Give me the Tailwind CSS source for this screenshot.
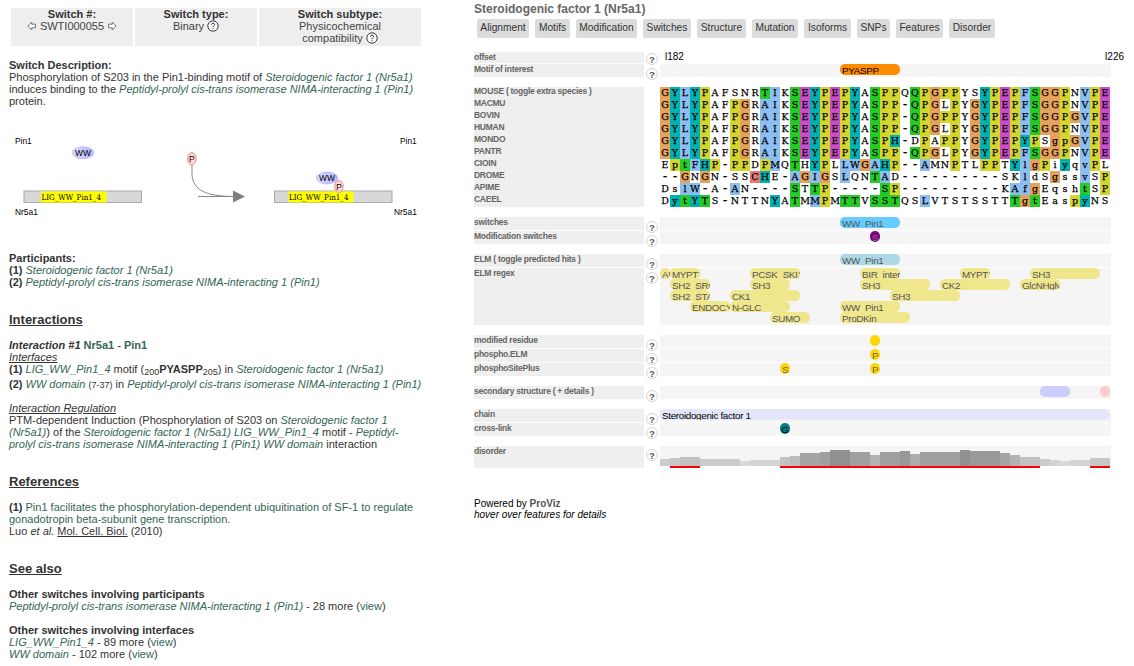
<!DOCTYPE html>
<html lang="en">
<head>
<meta charset="utf-8">
<title>SWTI000055</title>
<script src="https://cdn.jsdelivr.net/npm/@tailwindcss/browser@4"></script>
</head>
<body class="bg-white w-[1134px] h-[666px] overflow-hidden font-['Liberation_Sans',Arial,sans-serif]">
<div class="flex items-start">
  <section class="w-[474px] shrink-0 pl-[9px] pt-[8px] text-[11px] leading-[12px] text-[#333] whitespace-nowrap">
    <div class="flex gap-[2px] pl-[2px] h-[38px] text-center text-[#444]">
      <div class="w-[122px] bg-[#eee]"><b class="block text-[#333]">Switch #:</b>
        <div class="flex items-center justify-center gap-[3px]">
          <svg class="shrink-0" width="10" height="10" viewBox="0 0 10 10" fill="#fff" stroke="#666" stroke-width=".9"><path d="M.8 5 4.800 1V3.200H8.500V6.800H4.800V9Z"/></svg>
          <span>SWTI000055</span>
          <svg class="shrink-0" width="10" height="10" viewBox="0 0 10 10" fill="#fff" stroke="#666" stroke-width=".9"><path d="M9.200 5 5.200 1V3.200H1.500V6.800H5.200V9Z"/></svg>
        </div>
      </div>
      <div class="w-[122px] bg-[#eee]"><b class="block text-[#333]">Switch type:</b>
        <div class="flex items-center justify-center gap-[3px]"><span>Binary</span>
          <svg width="12" height="12" viewBox="0 0 12 12"><circle cx="6" cy="6" r="5.2" fill="#fff" stroke="#222" stroke-width=".9"/><path d="M4.4 4.7C4.4 2.7 7.6 2.7 7.6 4.6 7.6 5.8 6 5.8 6 7.2M6 8.2V9.2" fill="none" stroke="#222"/></svg>
        </div>
      </div>
      <div class="w-[162px] bg-[#eee]"><b class="block text-[#333]">Switch subtype:</b>
        <div>Physicochemical</div>
        <div class="flex items-center justify-center gap-[3px]"><span>compatibility</span>
          <svg width="12" height="12" viewBox="0 0 12 12"><circle cx="6" cy="6" r="5.2" fill="#fff" stroke="#222" stroke-width=".9"/><path d="M4.4 4.7C4.4 2.7 7.6 2.7 7.6 4.6 7.6 5.8 6 5.8 6 7.2M6 8.2V9.2" fill="none" stroke="#222"/></svg>
        </div>
      </div>
    </div>

    <div class="mt-[13px]">
      <b>Switch Description:</b><br>
      Phosphorylation of S203 in the Pin1-binding motif of <i class="text-[#365]">Steroidogenic factor 1 (Nr5a1)</i><br>
      induces binding to the <i class="text-[#365]">Peptidyl-prolyl cis-trans isomerase NIMA-interacting 1 (Pin1)</i><br>
      protein.
    </div>

    <svg class="block mt-[18px] -ml-[9px]" width="430" height="100" viewBox="0 0 430 100" font-family="Liberation Sans, Arial, sans-serif" fill="#000">
      <defs>
        <linearGradient id="blue"><stop offset="0" stop-color="#dcdcff"/><stop offset="1" stop-color="#b4b4fa"/></linearGradient>
        <radialGradient id="pink"><stop offset="0" stop-color="#fff0f0"/><stop offset="1" stop-color="#ffc4c4"/></radialGradient>
      </defs>
      <g font-size="8.4"><text x="15" y="19">Pin1</text><text x="400" y="19">Pin1</text><text x="15" y="90">Nr5a1</text><text x="394" y="90">Nr5a1</text></g>
      <g stroke="#aaa"><rect x="24" y="66" width="117.500" height="11.500" fill="#d8d8d8"/><rect x="274.500" y="66" width="117.500" height="11.500" fill="#d8d8d8"/></g>
      <g fill="#ff0"><rect x="41" y="66.500" width="65.500" height="11"/><rect x="288.500" y="66.500" width="65" height="11"/></g>
      <g font-family="DejaVu Serif, serif" font-size="7.800"><text x="41.500" y="75" textLength="59.500" lengthAdjust="spacingAndGlyphs">LIG_WW_Pin1_4</text><text x="289" y="75" textLength="59.500" lengthAdjust="spacingAndGlyphs">LIG_WW_Pin1_4</text></g>
      <g fill="none" stroke="#888"><path d="M192 40V48C192 66 207 71 233 71.500M198 71.500H233"/></g>
      <path d="M233 65.500 245 71.500 233 77.500Z" fill="#808080"/>
      <g stroke="#aaaaf0" stroke-width=".6" fill="url(#blue)"><ellipse cx="83" cy="27.700" rx="10.800" ry="6"/><ellipse cx="327" cy="53" rx="10.800" ry="6"/></g>
      <g stroke="#f08c8c" stroke-width=".9" fill="url(#pink)"><ellipse cx="191.800" cy="33.700" rx="4.300" ry="6.200"/><ellipse cx="339" cy="61.500" rx="4.300" ry="6"/></g>
      <g font-size="8.400" text-anchor="middle"><text x="83" y="30.800">WW</text><text x="327" y="56">WW</text><text x="191.800" y="37.200">P</text><text x="339" y="65">P</text></g>
    </svg>

    <div class="mt-[27px]">
      <b>Participants:</b><br>
      <b>(1)</b> <i class="text-[#365]">Steroidogenic factor 1 (Nr5a1)</i><br>
      <b>(2)</b> <i class="text-[#365]">Peptidyl-prolyl cis-trans isomerase NIMA-interacting 1 (Pin1)</i>
    </div>

    <h2 class="mt-[24px] h-[16px] leading-[16px] text-[13px] font-bold underline">Interactions</h2>
    <div class="mt-[11px]">
      <b><i>Interaction #1</i> <span class="text-[#365]">Nr5a1 - Pin1</span></b><br>
      <i class="underline">Interfaces</i><br>
      <b>(1)</b> <i class="text-[#365]">LIG_WW_Pin1_4</i> motif (<span class="text-[9px] relative top-[2px]">200</span><b>PYASPP</b><span class="text-[9px] relative top-[2px]">205</span>) in <i class="text-[#365]">Steroidogenic factor 1 (Nr5a1)</i>
      <div class="mt-[2px]"><b>(2)</b> <i class="text-[#365]">WW domain</i> <span class="text-[9px]">(7-37)</span> in <i class="text-[#365]">Peptidyl-prolyl cis-trans isomerase NIMA-interacting 1 (Pin1)</i></div>
    </div>
    <div class="mt-[11px]">
      <i class="underline">Interaction Regulation</i><br>
      PTM-dependent Induction (Phosphorylation of S203 on <i class="text-[#365]">Steroidogenic factor 1</i><br>
      <i class="text-[#365]">(Nr5a1)</i>) of the <i class="text-[#365]">Steroidogenic factor 1 (Nr5a1) LIG_WW_Pin1_4</i> motif - <i class="text-[#365]">Peptidyl-</i><br>
      <i class="text-[#365]">prolyl cis-trans isomerase NIMA-interacting 1 (Pin1) WW domain</i> interaction
    </div>

    <h2 class="mt-[24px] h-[16px] leading-[16px] text-[13px] font-bold underline">References</h2>
    <div class="mt-[11px]">
      <b>(1)</b> <span class="text-[#365]">Pin1 facilitates the phosphorylation-dependent ubiquitination of SF-1 to regulate<br>gonadotropin beta-subunit gene transcription.</span><br>
      Luo <i>et al.</i> <span class="underline">Mol. Cell. Biol.</span> (2010)
    </div>

    <h2 class="mt-[24px] h-[16px] leading-[16px] text-[13px] font-bold underline">See also</h2>
    <div class="mt-[11px]">
      <b>Other switches involving participants</b><br>
      <i class="text-[#365]">Peptidyl-prolyl cis-trans isomerase NIMA-interacting 1 (Pin1)</i> - 28 more (<span class="text-[#365]">view</span>)
    </div>
    <div class="mt-[12px]">
      <b>Other switches involving interfaces</b><br>
      <i class="text-[#365]">LIG_WW_Pin1_4</i> - 89 more (<span class="text-[#365]">view</span>)<br>
      <i class="text-[#365]">WW domain</i> - 102 more (<span class="text-[#365]">view</span>)
    </div>
  </section>

  <section class="w-[660px] shrink-0 pt-[2px] whitespace-nowrap">
    <h1 class="h-[14px] leading-[14px] text-[12px] font-bold text-[#666]">Steroidogenic factor 1 (Nr5a1)</h1>
    <nav class="mt-[3px] ml-[3px] flex gap-[6px] h-[19px] leading-[18px] text-[10.2px] text-center text-[#333]">
      <span class="w-[52px] rounded-[2px] bg-[#dcdcdc]">Alignment</span>
      <span class="w-[35px] rounded-[2px] bg-[#dcdcdc]">Motifs</span>
      <span class="w-[61px] rounded-[2px] bg-[#dcdcdc]">Modification</span>
      <span class="w-[48px] rounded-[2px] bg-[#dcdcdc]">Switches</span>
      <span class="w-[49px] rounded-[2px] bg-[#dcdcdc]">Structure</span>
      <span class="w-[46px] rounded-[2px] bg-[#dcdcdc]">Mutation</span>
      <span class="w-[47px] rounded-[2px] bg-[#dcdcdc]">Isoforms</span>
      <span class="w-[33px] rounded-[2px] bg-[#dcdcdc]">SNPs</span>
      <span class="w-[47px] rounded-[2px] bg-[#dcdcdc]">Features</span>
      <span class="w-[46px] rounded-[2px] bg-[#dcdcdc]">Disorder</span>
    </nav>
    <div id="tracks" class="mt-[14px]"></div>
    <footer class="mt-[30px] text-[10px] leading-[11px] text-black">Powered by <b class="text-[#555]">ProViz</b><br><i>hover over features for details</i></footer>
  </section>
</div>

<script>
const KH = 'bg-[#f0e68c] text-[#555]', GOLD = 'bg-[#ffd700] text-[#666]';
// feature: [start column, end column, lane, label, classes]
const groups = [
  [['offset', 11, 'scale'],
   ['Motif of interest', 13, [[18, 24, 0, 'PYASPP', 'bg-[#ff8c00] text-black']]]],
  ['alignment'],
  [['switches', 13, [[18, 24, 0, 'WW_Pin1', 'bg-[#66ccff] text-[#555]']]],
   ['Modification switches', 13, [[21, 22, 0, 'S', 'bg-[#800080] text-[#777]']]]],
  [['ELM ( toggle predicted hits )', 13, [[18, 24, 0, 'WW_Pin1', 'bg-[#add8e6] text-[#555]']]],
   ['ELM regex', 57, [
     [0, 1, 0, 'AU', KH], [1, 4, 0, 'MYPT1', KH], [9, 14, 0, 'PCSK_SKI1', KH], [20, 24, 0, 'BIR_inter', KH], [30, 33, 0, 'MYPT1', KH], [37, 44, 0, 'SH3', KH],
     [1, 5, 1, 'SH2_SRC', KH], [9, 13, 1, 'SH3', KH], [20, 27, 1, 'SH3', KH], [28, 35, 1, 'CK2', KH], [36, 40, 1, 'GlcNHglyc', KH],
     [1, 5, 2, 'SH2_STAT', KH], [7, 14, 2, 'CK1', KH], [23, 30, 2, 'SH3', KH],
     [3, 7, 3, 'ENDOCYT', KH], [7, 13, 3, 'N-GLC', KH], [18, 24, 3, 'WW_Pin1', KH],
     [11, 15, 4, 'SUMO', KH], [18, 25, 4, 'ProDKin', KH]]]],
  [['modified residue', 13, [[21, 22, 0, '', GOLD]]],
   ['phospho.ELM', 13, [[21, 22, 0, 'P', GOLD]]],
   ['phosphoSitePlus', 13, [[12, 13, 0, 'S', GOLD], [21, 22, 0, 'P', GOLD]]]],
  [['secondary structure ( + details )', 13, [[38, 41, 0, '', 'bg-[#ccccff]'], [44, 45, 0, '', 'bg-[#ffcccc]']]]],
  [['chain', 13, [[0, 45, 0, 'Steroidogenic factor 1', 'bg-[#e6e6fa] text-black']]],
   ['cross-link', 13, [[12, 13, 0, 'G', 'bg-[#008080] text-black']]]],
  [['disorder', 22, 'disorder']]
];
const seqs = [
  ['MOUSE ( toggle extra species )', 'GYLYPAFSNRTIKSEYPEPYASPPQQPGPPYSYPEPFSGGPNVPE', 'otbty.....gb.gmtymyt.gyy.gyoyy..tymybgooy.bym'],
  ['MACMU', 'GYLYPAFPGRAIKSEYPEPYASPP-QPGLPYGYPEPFSGGPNVPE', 'otbty..yo.bb.gmtymyt.gyy.gyo.y.otymybgooy.bym'],
  ['BOVIN', 'GYLYPAFPGRAIKSEYPEPYASPP-QPGPPYGYPEPFSGGPGVPE', 'otbty..yo.bb.gmtymyt.gyy.gyoyy.otymybgooyobym'],
  ['HUMAN', 'GYLYPAFPGRAIKSEYPEPYASPP-QPGLPYGYPEPFSGGPNVPE', 'otbty..yo.bb.gmtymyt.gyy.gyo.y.otymybgooy.bym'],
  ['MONDO', 'GYLYPAFPGRAIKSEYPEPYASPH-DPAPPYGYPEPYPSgpGVPE', 'otbty..yo.bb.gmtymyt.gyt..y.yy.otymyty.oyobym'],
  ['PANTR', 'GYLYPAFPGRAIKSEYPEPYASPP-QPGLPYGYPEPFSGGPNVPE', 'otbty..yo.bb.gmtymyt.gyy.gyo.y.otymybgooy.bym'],
  ['CIOIN', 'EptFHP-PPDPMQTHYPLLWGAHP--AMNPTLPPTYlgPiyqvPL', '.ygbty.yy.yb.g.ty.bbobty..b..y..yy.tboy.t.by.'],
  ['DROME', '--GNGN-SSCHE-AGIGSLQNTAD----------SKldSgssvSP', '..o.o....rt..bobo.b..gb.............b..o..b.y'],
  ['APIME', 'DslW-A-AN----STTP-----SP----------KAfgEqshtSP', '..bb...b.....g.gy.....gy...........bbo....g.y'],
  ['CAEEL', 'DytYTS-NTTNYATMMPMTTVSSTQSLVTSTSSTTTgtEaspyNS', '.tgtg......t.g.by.gg.ggg..b........gog...yt..']
];
const fills = { o: 'bg-[#e6a15c]', t: 'bg-[#00b2b2]', b: 'bg-[#8cbef2]', y: 'bg-[#d4d62e]', g: 'bg-[#26cc26]', m: 'bg-[#cc4dcc]', r: 'bg-[#e67878]', '.': '' };
const heights = [7,8,9,9,7,7,7,7,5,6,6,6,9,10,13,13,14,16,16,14,14,11,14,14,15,12,14,14,14,14,16,15,15,15,13,11,9,9,7,6,5,6,6,8,8];
const tone = { 5:'#dadada', 6:'#d4d4d4', 7:'#cbcbcb', 8:'#c7c7c7', 9:'#c2c2c2', 10:'#bbbbbb', 11:'#b3b3b3', 12:'#acacac', 13:'#a5a5a5', 14:'#a0a0a0', 15:'#999999', 16:'#919191' };
const label = 'w-[170px] shrink-0 bg-[#efefef] text-[8.5px] tracking-[-0.27px] font-bold text-[#666]';

function feature([s, e, lane, text, cls]) {
  const small = e - s === 1 && text !== 'AU';
  return `<div class="h-[11px] overflow-hidden rounded-[5px] text-[9.8px] tracking-[-0.3px] leading-[14px] ${small ? 'text-center' : 'pl-[2px]'} ${cls}" style="grid-column:${s + 1}/${e + 1};grid-row:${lane + 1}">${text}</div>`;
}
function body(d) {
  if (d === 'scale') return '<div class="w-[464px] shrink-0 flex justify-between pl-[5px] text-[10px] leading-[9px] text-black"><span>l182</span><span>l226</span></div>';
  if (d === 'disorder') return '<div class="w-[451px] h-[22px] bg-[#f5f5f5] flex items-end">' + heights.map((h, i) => {
    const red = (i > 0 && i < 4) || (i > 11 && i < 38) || i > 42;
    return `<div class="w-[10px]"><div style="height:${h}px;background:${tone[h]}"></div><div class="h-[2px] ${red ? 'bg-[#ff0000]' : 'bg-white'}"></div></div>`;
  }).join('') + '</div>';
  return `<div class="w-[451px] bg-[#f5f5f5] grid grid-cols-[repeat(45,10px)] auto-rows-[11px] content-start">${d.map(feature).join('')}</div>`;
}
function row([name, h, d]) {
  const pad = d === 'scale' ? 'pt-[1px]' : d === 'disorder' ? 'pt-[3px]' : 'pt-[4px]';
  return `<div class="flex" style="height:${h}px"><div class="${label} leading-[11px]">${name}</div>
    <div class="w-[16px] shrink-0 pl-[2px] ${pad}"><div class="w-[12px] h-[12px] rounded-full border border-[#d4d4d4] bg-white text-[9.5px] leading-[11px] font-bold text-center text-[#555]">?</div></div>${body(d)}</div>`;
}
function alignment() {
  return '<div>' + seqs.map(([n, s, c]) => `<div class="flex h-[12px]"><div class="${label} leading-[9px]">${n}</div><div class="w-[16px] shrink-0"></div>` +
    [...s].map((ch, i) => `<span class="w-[10px] h-[12px] text-center text-black ${ch === '-' ? "text-[12px] leading-[12px] font-['Liberation_Mono',monospace] [-webkit-text-stroke:0.2px_#000]" : "text-[9.5px] leading-[11px] font-['DejaVu_Serif',serif] [-webkit-text-stroke:0.25px_#000]"} ${fills[c[i]]}">${ch}</span>`).join('') + '</div>').join('') + '</div>';
}
document.getElementById('tracks').innerHTML = '<div class="flex flex-col gap-[10px]">' +
  groups.map(g => g[0] === 'alignment' ? alignment() : `<div class="flex flex-col gap-[1px]">${g.map(row).join('')}</div>`).join('') + '</div>';
</script>
</body>
</html>
